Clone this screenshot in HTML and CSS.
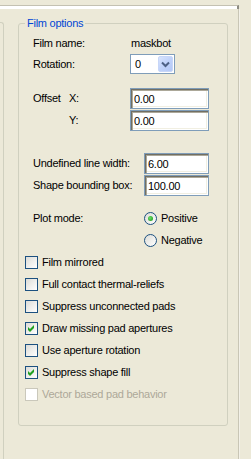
FILE: index.html
```html
<!DOCTYPE html>
<html>
<head>
<meta charset="utf-8">
<link rel="stylesheet" href="styles.css">
</head>
<body>
<div class="screen">
  <div class="topband"></div>
  <div class="page">
    <div class="leftstub"></div>
    <fieldset class="group">
      <legend class="group-title">Film options</legend>
      <div class="row row-name"><span class="label">Film name:</span><span class="value">maskbot</span></div>
      <div class="row row-rot"><span class="label">Rotation:</span>
        <div class="combo"><span class="combo-text">0</span><span class="combo-btn"><svg width="15" height="16" viewBox="0 0 15 16"><path d="M4 6.5 L7.5 10 L11 6.5" fill="none" stroke="#4d6185" stroke-width="2"/></svg></span></div>
      </div>
      <div class="row row-x"><span class="label-offset">Offset</span><span class="label-axis">X:</span><div class="input">0.00</div></div>
      <div class="row row-y"><span class="label-offset"></span><span class="label-axis">Y:</span><div class="input">0.00</div></div>
      <div class="row row-und"><span class="label-wide">Undefined line width:</span><div class="input input-short">6.00</div></div>
      <div class="row row-shape"><span class="label-wide">Shape bounding box:</span><div class="input input-short">100.00</div></div>
      <div class="row row-radio first-radio"><span class="label-wide">Plot mode:</span><span class="radio checked"></span><span class="opt-text">Positive</span></div>
      <div class="row row-radio"><span class="label-wide"></span><span class="radio"></span><span class="opt-text">Negative</span></div>
      <div class="checks">
        <div class="row row-check"><span class="check"></span><span class="opt-text">Film mirrored</span></div>
        <div class="row row-check"><span class="check"></span><span class="opt-text">Full contact thermal-reliefs</span></div>
        <div class="row row-check"><span class="check"></span><span class="opt-text">Suppress unconnected pads</span></div>
        <div class="row row-check"><span class="check"><svg width="11" height="11" viewBox="0 0 11 11"><path d="M2 4 L4 6 L8 2 L8 5 L4 9 L2 7 Z" fill="#21a121"/></svg></span><span class="opt-text">Draw missing pad apertures</span></div>
        <div class="row row-check"><span class="check"></span><span class="opt-text">Use aperture rotation</span></div>
        <div class="row row-check"><span class="check"><svg width="11" height="11" viewBox="0 0 11 11"><path d="M2 4 L4 6 L8 2 L8 5 L4 9 L2 7 Z" fill="#21a121"/></svg></span><span class="opt-text">Suppress shape fill</span></div>
        <div class="row row-check disabled"><span class="check"></span><span class="opt-text">Vector based pad behavior</span></div>
      </div>
    </fieldset>
  </div>
</div>
</body>
</html>
```

FILE: styles.css
```css
html, body {
  margin: 0;
  padding: 0;
  background: #ece9d8;
}
body {
  width: 251px;
  height: 459px;
  overflow: hidden;
  font-family: "Liberation Sans", Arial, sans-serif;
  font-size: 11px;
  letter-spacing: -0.25px;
  color: #000;
  line-height: 13px;
}
.screen {
  padding-top: 5px;
}
.topband {
  width: 237px;
  height: 3px;
  background: #fff;
  border-top: 1px solid #c4c1b2;
  border-right: 2px solid #8d8b82;
}
.page {
  width: 238px;
  height: 450px;
  border-right: 1px solid #c9c6b6;
  box-shadow: 1px 0 0 #f3f1e8;
  display: flex;
  align-items: flex-start;
}
.leftstub {
  width: 3px;
  height: 440px;
  margin-top: 13px;
  border-top: 1px solid #d0d0bf;
  border-right: 1px solid #d0d0bf;
  border-top-right-radius: 3px;
}
.group {
  box-sizing: border-box;
  width: 210px;
  margin: 8px 0 0 14px;
  padding: 0 0 20px 14px;
  border: 1px solid #d0d0bf;
  border-radius: 3px;
  min-width: 0;
}
.group-title {
  color: #0046d5;
  padding: 0 2px;
  margin-left: -8px;
  line-height: 13px;
}
.row {
  display: flex;
  align-items: center;
  height: 21px;
  margin-top: 1px;
}
.row-name { height: 20px; margin-top: 3px; }
.row-rot { height: 20px; margin-top: 1px; }
.row-x { margin-top: 14px; }
.row-und { margin-top: 22px; }
.label { width: 97px; flex: none; }
.value { padding-left: 1px; }
.label-offset { width: 36px; flex: none; }
.label-axis { width: 61px; flex: none; }
.label-wide { width: 111px; flex: none; }
.combo {
  box-sizing: border-box;
  width: 45px;
  height: 20px;
  border: 1px solid #7f9db9;
  background: #fff;
  display: flex;
  align-items: center;
  justify-content: space-between;
  padding: 1px;
}
.combo-text { padding-left: 3px; }
.combo-btn {
  box-sizing: border-box;
  width: 15px;
  height: 16px;
  background: linear-gradient(135deg, #d8e4fd 0%, #c0d2fa 50%, #b4c8f6 100%);
  border: 1px solid #c7d6f8;
  border-radius: 2px;
  display: flex;
  align-items: center;
  justify-content: center;
}
.combo-btn svg { display: block; margin: -1px; }
.input {
  box-sizing: border-box;
  width: 79px;
  height: 21px;
  border: 1px solid #7f9db9;
  background: #fff;
  box-shadow: inset 1px 1px 0 #716f64, inset 2px 2px 0 #aca899, inset -1px -1px 0 #fff, inset -2px -2px 0 #f1efe2;
  padding: 2px 0 0 3px;
  display: flex;
  align-items: center;
}
.input-short { width: 65px; }
.row-radio { height: 22px; margin-top: 0; }
.first-radio { margin-top: 11px; }
.radio {
  box-sizing: border-box;
  width: 13px;
  height: 13px;
  flex: none;
  border: 1px solid #1c5180;
  border-radius: 50%;
  background: linear-gradient(135deg, #dcdcd7 0%, #fff 100%);
  display: flex;
  align-items: center;
  justify-content: center;
}
.radio.checked::after {
  content: "";
  width: 5px;
  height: 5px;
  border-radius: 50%;
  background: radial-gradient(circle at 40% 40%, #6fe06b 0%, #21a121 80%);
}
.opt-text { padding-left: 4px; white-space: nowrap; }
.checks { margin-left: -8px; }
.row-check { height: 22px; margin-top: 0; }
.check {
  box-sizing: border-box;
  width: 13px;
  height: 13px;
  flex: none;
  border: 1px solid #1c5180;
  background: linear-gradient(135deg, #dcdcd7 0%, #fff 100%);
  display: flex;
}
.check svg { display: block; }
.disabled .check {
  border-color: #cac8bb;
  background: #fff;
}
.disabled .opt-text { color: #aca899; }
```
